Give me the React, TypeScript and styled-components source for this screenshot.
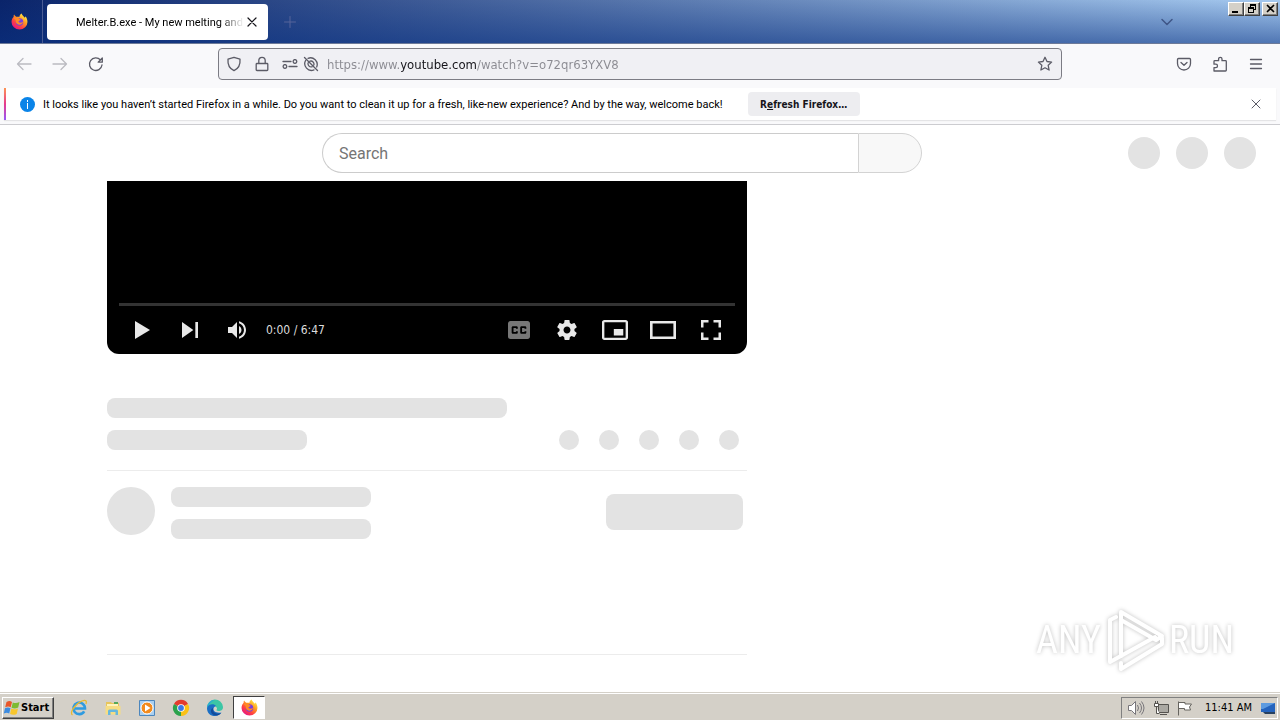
import React from "react";
import styled, { createGlobalStyle, css } from "styled-components";

const ui = `Roboto, "Liberation Sans", sans-serif`;
const uiWide = `"DejaVu Sans Condensed", "DejaVu Sans", sans-serif`;

const GlobalStyle = createGlobalStyle`
  *, *::before, *::after { box-sizing: border-box; }
  body { margin: 0; background: #fff; font-family: ${ui}; font-size: 11px; color: #15141a; }
  button { font: inherit; color: inherit; padding: 0; border: 0; background: none; }
  svg { display: block; flex: none; }
`;

const Desktop = styled.div`
  display: flex;
  flex-direction: column;
  min-height: 100vh;
`;

/* ---- browser chrome ---- */

const TitleBar = styled.header`
  display: flex;
  height: 44px;
  border-bottom: 1px solid #6d7a98;
  background:
    linear-gradient(to bottom, transparent, rgba(10, 50, 130, 0.55)),
    linear-gradient(to right, #0a246a, #a6caf0);
`;

const FirefoxView = styled.button`
  display: grid;
  place-items: center;
  width: 43px;
  padding-right: 3px;
  border-right: 1px solid #4a5c94;
`;

const Tab = styled.div`
  display: flex;
  align-items: center;
  width: 221px;
  height: 36px;
  margin: 4px 0 0 4px;
  padding: 0 8px 0 29px;
  border-radius: 4px;
  background: #fff;
`;

const TabTitle = styled.span`
  flex: 1;
  white-space: nowrap;
  color: #000;
  mask-image: linear-gradient(to left, transparent, #000 24px);
`;

const IconButton = styled.button<{ $w?: number; $color?: string }>`
  display: grid;
  place-items: center;
  width: ${(p) => p.$w ?? 36}px;
  height: 32px;
  flex: none;
  color: ${(p) => p.$color ?? "#5b5b66"};
`;

const TabActions = styled.div`
  display: flex;
  align-items: center;
  flex: 1;
  justify-content: space-between;
  padding: 0 43px 0 4px;
`;

const WindowButtons = styled.div`
  display: flex;
  padding: 2px 2px 0 0;
`;

const raised = css`
  background: #d4d0c8;
  border: 1px solid;
  border-color: #fff #404040 #404040 #fff;
  box-shadow: inset -1px -1px 0 #808080;
`;

const WindowButton = styled.button<{ $gap?: boolean }>`
  ${raised}
  display: grid;
  place-items: center;
  width: 16px;
  height: 14px;
  margin-left: ${(p) => (p.$gap ? 2 : 0)}px;
  color: #000;
`;

const NavBar = styled.nav`
  display: flex;
  align-items: center;
  height: 44px;
  padding: 0 6px 4px;
  background: #f9f9fb;
`;

const NavGroup = styled.div<{ $end?: boolean }>`
  display: flex;
  flex: 1 1 0;
  justify-content: ${(p) => (p.$end ? "flex-end" : "flex-start")};
`;

const AddressBar = styled.form`
  display: flex;
  align-items: center;
  flex: 0 1 844px;
  height: 32px;
  padding: 0 2px;
  border: 1px solid #7c7c84;
  border-radius: 4px;
  background: #f0f0f4;
`;

const UrlInput = styled.input`
  flex: 1;
  min-width: 0;
  height: 28px;
  padding: 0;
  margin-left: 8px;
  border: 0;
  outline: 0;
  font: 13px ${uiWide};
  color: #75757d;
  -webkit-text-fill-color: transparent;
  background: linear-gradient(to right, #8a8a91 74px, #15141a 74px, #15141a 150px, #8a8a91 150px);
  -webkit-background-clip: text;
  background-clip: text;
`;

const Notice = styled.section`
  display: flex;
  align-items: center;
  height: 37px;
  padding: 0 4px 4px;
  background: #f9f9fb;
  border-bottom: 1px solid #ccccd0;
`;

const NoticeCard = styled.div`
  display: flex;
  align-items: center;
  flex: 1;
  height: 32px;
  padding-left: 14px;
  border-left: 2px solid;
  border-image: linear-gradient(to bottom, #ff9a50, #e63a8c, #9059ff) 1;
  background: #fff;
  box-shadow: 0 1px 1px #e4e4e6;
`;

const NoticeText = styled.span`
  margin: 0 25px 0 8px;
  color: #000;
  white-space: nowrap;
`;

const RefreshButton = styled.button`
  width: 112px;
  height: 24px;
  border-radius: 4px;
  background: #ededf0;
  font-weight: bold;
  font-size: 10px;
  font-family: ${uiWide};
  white-space: nowrap;
`;

const Spacer = styled.div`
  flex: 1;
`;

/* ---- page ---- */

const Page = styled.main`
  position: relative;
  flex: 1;
  background: #fff;
`;

const Masthead = styled.header`
  display: flex;
  align-items: center;
  height: 56px;
`;

const MastheadStart = styled.div`
  flex: 1 1 0;
`;

const MastheadEnd = styled.div`
  display: flex;
  justify-content: flex-end;
  gap: 16px;
  flex: 1 1 36px;
  padding-right: 24px;
`;

const SearchForm = styled.form`
  display: flex;
  flex: 0 1 600px;
  height: 40px;
`;

const SearchInput = styled.input`
  flex: 1;
  min-width: 0;
  padding: 0 16px;
  border: 1px solid #ccc;
  border-right: 0;
  border-radius: 40px 0 0 40px;
  outline: 0;
  background: #fff;
  font: 16px Roboto, sans-serif;
  color: #111;
  &::placeholder { color: #757575; opacity: 1; }
`;

const SearchButton = styled.button`
  width: 64px;
  border: 1px solid #d3d3d3;
  border-radius: 0 40px 40px 0;
  background: #f8f8f8;
`;

const Bone = styled.div<{ $w: number; $h?: number; $r?: number }>`
  width: ${(p) => p.$w}px;
  height: ${(p) => p.$h ?? 20}px;
  border-radius: ${(p) => p.$r ?? 8}px;
  background: #e3e3e3;
`;

const Columns = styled.div`
  display: grid;
  grid-template-columns: minmax(0, 640fr) minmax(0, 402fr);
  gap: 24px;
  max-width: 1066px;
  margin: 0 auto;
`;

const Player = styled.section`
  display: flex;
  flex-direction: column;
  justify-content: flex-end;
  height: 173px;
  padding: 0 12px;
  border-radius: 0 0 12px 12px;
  background: #000;
`;

const Progress = styled.div`
  height: 3px;
  background: #333;
`;

const Controls = styled.div`
  display: flex;
  align-items: center;
  height: 48px;
  color: #eee;
`;

const PlayerButton = styled.button<{ $w: number; $dim?: boolean }>`
  display: grid;
  place-items: center;
  width: ${(p) => p.$w}px;
  height: 48px;
  color: ${(p) => (p.$dim ? "#777" : "#e8e8e8")};
`;

const Time = styled.span`
  padding-left: 6px;
  font: 12px ${uiWide};
  color: #ddd;
`;

const Details = styled.section`
  display: flex;
  flex-direction: column;
  gap: 12px;
  padding: 44px 0 20px;
  border-bottom: 1px solid #ececec;
`;

const Row = styled.div`
  display: flex;
  justify-content: space-between;
  padding-right: 8px;
`;

const Dots = styled.div`
  display: flex;
  gap: 20px;
`;

const Owner = styled.section`
  display: flex;
  gap: 16px;
  height: 184px;
  padding: 16px 4px 0 0;
  border-bottom: 1px solid #ececec;
`;

const OwnerLines = styled.div`
  display: flex;
  flex-direction: column;
  gap: 12px;
  flex: 1;
`;

const SubscribeSlot = styled.div`
  padding-top: 7px;
`;

const Watermark = styled.div`
  position: absolute;
  right: 46px;
  bottom: 20px;
  display: flex;
  align-items: center;
  gap: 4px;
  color: #fff;
  font: 38px "Liberation Sans Narrow", "Roboto Condensed", "Liberation Sans", sans-serif;
  filter: drop-shadow(0 0 2px rgba(0, 0, 0, 0.25));
`;

/* ---- taskbar ---- */

const Taskbar = styled.footer`
  display: flex;
  align-items: center;
  height: 28px;
  padding: 2px 2px 0;
  border-top: 1px solid #d4d0c8;
  box-shadow: inset 0 1px 0 #fff;
  background: #d4d0c8;
`;

const StartButton = styled.button`
  ${raised}
  display: flex;
  align-items: center;
  width: 52px;
  height: 22px;
  margin-right: 8px;
  font-weight: bold;
  font-family: ${uiWide};
  color: #000;
`;

const TaskButton = styled.button<{ $active?: boolean }>`
  display: grid;
  place-items: center;
  width: ${(p) => (p.$active ? 32 : 34)}px;
  height: 23px;
  ${(p) =>
    p.$active &&
    css`
      margin-left: 1px;
      background: #fff;
      border: 1px solid;
      border-color: #404040 #fff #fff #404040;
    `}
`;

const Tray = styled.div`
  display: flex;
  align-items: center;
  gap: 8px;
  height: 22px;
  padding: 0 1px 0 5px;
  border: 1px solid;
  border-color: #808080 #fff #fff #808080;
  color: #000;
`;

const Clock = styled.time`
  padding-left: 4px;
  font-family: ${uiWide};
  white-space: nowrap;
`;

/* ---- drawings ---- */

const Line = ({ d, size = 16, w = 1.3, box = 16 }: { d: string; size?: number; w?: number; box?: number }) => (
  <svg width={size} height={size} viewBox={`0 0 ${box} ${box}`} fill="none" stroke="currentColor" strokeWidth={w} strokeLinecap="round" strokeLinejoin="round" aria-hidden>
    <path d={d} />
  </svg>
);

const Solid = ({ d, w, h, box }: { d: string; w: number; h: number; box: string }) => (
  <svg width={w} height={h} viewBox={box} fill="currentColor" fillRule="evenodd" preserveAspectRatio="none" aria-hidden>
    <path d={d} />
  </svg>
);

const FirefoxLogo = ({ id, size = 17 }: { id: string; size?: number }) => (
  <svg width={size} height={size} viewBox="0 0 32 32" aria-hidden>
    <defs>
      <linearGradient id={id} x1="0.85" y1="0.1" x2="0.2" y2="0.95">
        <stop offset="0" stopColor="#fff04a" />
        <stop offset="0.35" stopColor="#ff9a20" />
        <stop offset="0.7" stopColor="#ff3d45" />
        <stop offset="1" stopColor="#e31587" />
      </linearGradient>
    </defs>
    <path fill={`url(#${id})`} d="M20 1c1 4 4 5 6 8 1-1 1-2 1-3 3 3 4 7 4 11a15 14 0 0 1-30 0C1 12 3 9 5 7c0-2 0-3 1-4 1 2 2 3 4 4l6 0c0-3 2-5 4-6z" />
    <circle cx="16" cy="17" r="7" fill="#7a3de0" />
    <path fill="#ff8a25" d="M5 10c4-3 8-2 10 1l3 1c0 2-3 2-4 4 1 3 6 3 9 0-1 6-8 8-12 4-3-3-2-6-2-7z" />
  </svg>
);

const WindowsFlag = () => (
  <svg width="18" height="16" viewBox="0 0 18 16" aria-hidden>
    <path fill="#e8562a" d="M3.500 2C6 .5 7.500 1 9 2L7.700 7.300C6 6.300 4.500 6.300 2.200 7.300z" />
    <path fill="#7dbb32" d="M9.800 2.400c2 1 4 1 6.700-.4L15.200 7.500c-2.400 1.200-4.500 1.200-6.700.2z" />
    <path fill="#3c8be0" d="M2 8.200c2-1 4-.9 5.500 0L6.200 13.500C4.500 12.500 3 12.500.8 13.500z" />
    <path fill="#f8c62c" d="M8.300 8.600c2.200 1 4.200 1 6.700-.2l-1.300 5.500c-2.500 1.200-4.600 1-6.600 0z" />
  </svg>
);

const ExplorerLogo = () => (
  <svg width="18" height="18" viewBox="0 0 18 18" fill="none" aria-hidden>
    <path d="M14.200 12.300A5.800 5.800 0 1 1 15 9.500H5" stroke="#2f9be0" strokeWidth="2.600" />
    <path d="M2.500 16C-1 14 5 5 12 2c4-1.500 5 0 4 3" stroke="#e8b92e" strokeWidth="1.300" />
  </svg>
);

const FolderLogo = () => (
  <svg width="18" height="18" viewBox="0 0 18 18" aria-hidden>
    <path d="M2 3h5l1 1h7v11H2z" fill="#e7c55c" />
    <path d="M3 5h11v3H3z" fill="#fdf3bd" />
    <path d="M1.500 7h15v8.500h-15z" fill="#f6dd83" />
    <path d="M4 16v-4q0-1.500 1.500-1.500h7q1.500 0 1.500 1.500v4h-2.500v-3h-5v3z" fill="#66b7de" />
    <path d="M10 3h4v2h-4z" fill="#54a85a" />
  </svg>
);

const MediaLogo = () => (
  <svg width="18" height="18" viewBox="0 0 18 18" aria-hidden>
    <path d="M1.500 1.500h15v15h-15z" fill="#a9cff0" stroke="#4c86bd" />
    <circle cx="9" cy="9" r="6" fill="#f28a1c" stroke="#fff" />
    <path d="M7 5.500 12.500 9 7 12.500z" fill="#fff" />
  </svg>
);

const ChromeLogo = () => (
  <svg width="18" height="18" viewBox="0 0 18 18" aria-hidden>
    <path d="M9 9 2 5A8 8 0 0 1 16 5z" fill="#e33b2e" />
    <path d="M9 9 16 5A8 8 0 0 1 9 17z" fill="#fbc116" />
    <path d="M9 9v8A8 8 0 0 1 2 5z" fill="#2ba24c" />
    <circle cx="9" cy="9" r="3.800" fill="#fff" />
    <circle cx="9" cy="9" r="2.900" fill="#3b78e7" />
  </svg>
);

const EdgeLogo = () => (
  <svg width="18" height="18" viewBox="0 0 18 18" aria-hidden>
    <path d="M1 9a8 8 0 0 1 16-1c0 3-2 4-4.500 4-2 0-2.500-.8-1.500-2 .5-3-6-5-10-1z" fill="#3cc6a5" />
    <path d="M1 9a8 8 0 0 1 8-8C3 4 5 4 1 9z" fill="#2aa9d8" />
    <path d="M1 9c1-4 7-5 9-2-4 1-4 8 5.500 6.500C12 19 1 18.500 1 9z" fill="#1b6fc4" />
    <path d="M7 9c-1 4 3 7 8 5-3 4-9 3-10-1-.4-2 .5-3.500 2-4z" fill="#134b9a" />
  </svg>
);

const ShieldD = "M8 1.300 14 3.200C14.500 8.500 12 12.700 8 14.700 4 12.700 1.500 8.500 2 3.200z";
const LockD = "M3 7.500h10q.8 0 .8.800v5.400q0 .8-.8.800H3q-.8 0-.8-.8V8.300q0-.8.8-.8zM4.800 7.300V4.500a3.200 3.200 0 0 1 6.400 0v2.800";
const SlidersD = "M1 5.500h8M15 10.500H7M13 3.700a1.800 1.800 0 1 1-.1 0M3 8.700a1.800 1.800 0 1 1-.1 0";
const BlockedD = "M1.500 1.500l13 13M5 2.300A6.700 6.700 0 0 1 13.700 11M2.600 4.500A6.700 6.700 0 0 0 11 13.900M7 5.200A3 3 0 0 1 10.800 9M5.200 6.600A3.200 3.200 0 0 0 9 10.800";
const StarD = "M8 1.300l2 4.200 4.600.6-3.400 3.200.9 4.700L8 11.800 3.900 14l.9-4.700L1.400 6.100 6 5.500z";
const PocketD = "M2.500 2.500h11q1 0 1 1V7.500a6.500 6.500 0 0 1-13 0V3.500q0-1 1-1zM5 6.500l3 2.800 3-2.800";
const PuzzleD = "M2 15V11.600h1.800a1.700 1.700 0 0 0 0-3.400H2V5.500q0-.8.800-.8H6.600V3a1.700 1.700 0 0 1 3.400 0v1.700h3.500q.8 0 .8.800v8.700q0 .8-.8.800z";

const GearD =
  "m 23.94,18.78 c .03,-0.25 .05,-0.51 .05,-0.78 0,-0.27 -0.02,-0.52 -0.05,-0.78 l 1.68,-1.32 c .15,-0.12 .19,-0.33 .09,-0.51 l -1.6,-2.76 c -0.09,-0.17 -0.31,-0.24 -0.48,-0.17 l -1.99,.8 c -0.41,-0.32 -0.86,-0.58 -1.35,-0.78 l -0.30,-2.12 c -0.02,-0.19 -0.19,-0.33 -0.39,-0.33 l -3.2,0 c -0.2,0 -0.36,.14 -0.39,.33 l -0.30,2.12 c -0.48,.2 -0.93,.47 -1.35,.78 l -1.99,-0.8 c -0.18,-0.07 -0.39,0 -0.48,.17 l -1.6,2.76 c -0.10,.17 -0.05,.39 .09,.51 l 1.68,1.32 c -0.03,.25 -0.05,.52 -0.05,.78 0,.26 .02,.52 .05,.78 l -1.68,1.32 c -0.15,.12 -0.19,.33 -0.09,.51 l 1.6,2.76 c .09,.17 .31,.24 .48,.17 l 1.99,-0.8 c .41,.32 .86,.58 1.35,.78 l .30,2.12 c .02,.19 .19,.33 .39,.33 l 3.2,0 c .2,0 .36,-0.14 .39,-0.33 l .30,-2.12 c .48,-0.2 .93,-0.47 1.35,-0.78 l 1.99,.8 c .18,.07 .39,0 .48,-0.17 l 1.6,-2.76 c .09,-0.17 .05,-0.39 -0.09,-0.51 l -1.68,-1.32 z m -5.94,2.01 c -1.54,0 -2.8,-1.25 -2.8,-2.8 0,-1.54 1.25,-2.8 2.8,-2.8 1.54,0 2.8,1.25 2.8,2.8 0,1.54 -1.25,2.8 -2.8,2.8 z";
const CaptionsD =
  "M11,11 C9.9,11 9,11.9 9,13 L9,23 C9,24.1 9.9,25 11,25 L25,25 C26.1,25 27,24.1 27,23 L27,13 C27,11.900 26.1,11 25,11 Z M17,17 L15.5,17 L15.5,16.5 L13.5,16.5 L13.5,19.5 L15.5,19.5 L15.5,19 L17,19 L17,20 C17,20.55 16.55,21 16,21 L13,21 C12.45,21 12,20.55 12,20 L12,16 C12,15.45 12.45,15 13,15 L16,15 C16.55,15 17,15.45 17,16 Z M24,17 L22.5,17 L22.5,16.5 L20.5,16.5 L20.5,19.5 L22.5,19.5 L22.5,19 L24,19 L24,20 C24,20.55 23.55,21 23,21 L20,21 C19.45,21 19,20.55 19,20 L19,16 C19,15.45 19.45,15 20,15 L23,15 C23.55,15 24,15.45 24,16 Z";

const leftControls = [
  { label: "Play", w: 15, h: 18, box: "12 10 13 16", d: "M12,26 25,18 12,10z" },
  { label: "Next", w: 16, h: 16, box: "12 12 12 12", d: "M12,24 20.5,18 12,12zM22,12v12h2V12z" },
  {
    label: "Mute",
    w: 18,
    h: 18,
    box: "8 9 18 18",
    d: "M8,21 L12,21 L17,26 L17,10 L12,15 L8,15 Z M19,14 L19,22 C20.48,21.32 21.5,19.77 21.5,18 C21.5,16.26 20.48,14.74 19,14 Z M19,11.29 C21.89,12.15 24,14.83 24,18 C24,21.17 21.89,23.85 19,24.71 L19,26.77 C23.01,25.86 26,22.28 26,18 C26,13.72 23.01,10.14 19,9.23 Z",
  },
];

const rightControls = [
  { label: "Subtitles", w: 22, h: 18, box: "9 11 18 14", d: CaptionsD, dim: true },
  { label: "Settings", w: 20, h: 20, box: "10 10 16 16", d: GearD },
  { label: "Miniplayer", w: 26, h: 20, box: "7 9 22 18", d: "M25,17H17V23H25Z M29,25V11C29,9.9 28.1,9 27,9L9,9C7.9,9 7,9.9 7,11L7,25C7,26.1 7.9,27 9,27L27,27C28.1,27 29,26.1 29,25Z M27,25H9V11H27Z" },
  { label: "Theater mode", w: 26, h: 18, box: "8 11 20 14", d: "M28,11V25H8V11ZM10,13H26V23H10Z" },
  { label: "Full screen", w: 20, h: 20, box: "10 10 16 16", d: "M10,16h2v-4h4v-2H10zM20,10v2h4v4h2V10zM24,24h-4v2H26v-6h-2zM12,20H10V26h6v-2h-4z" },
];

const tasks = [
  { label: "Internet Explorer", icon: <ExplorerLogo /> },
  { label: "Windows Explorer", icon: <FolderLogo /> },
  { label: "Media Player", icon: <MediaLogo /> },
  { label: "Chrome", icon: <ChromeLogo /> },
  { label: "Edge", icon: <EdgeLogo /> },
];

export default function App() {
  return (
    <Desktop>
      <GlobalStyle />
      <TitleBar>
        <FirefoxView aria-label="Firefox View">
          <FirefoxLogo id="fx-view" />
        </FirefoxView>
        <Tab>
          <TabTitle>Melter.B.exe - My new melting and</TabTitle>
          <IconButton $w={16} $color="#15141a" aria-label="Close tab">
            <Line d="M4 4l8 8M12 4l-8 8" w={1.2} />
          </IconButton>
        </Tab>
        <TabActions>
          <IconButton $color="#56659a" aria-label="New tab">
            <Line d="M8 2.500v11M2.500 8h11" w={1} />
          </IconButton>
          <IconButton $color="#3f5687" aria-label="List all tabs">
            <Line d="M3 5.500l5 5 5-5" w={1.5} />
          </IconButton>
        </TabActions>
        <WindowButtons>
          <WindowButton aria-label="Minimize">
            <Solid w={12} h={10} box="0 0 12 10" d="M2 7h6v2H2z" />
          </WindowButton>
          <WindowButton aria-label="Restore">
            <Solid w={12} h={10} box="0 0 12 10" d="M4 0h6v6H8V9H2V3h2zM5 2v1h3v2h1V2zM3 5v3h4V5z" />
          </WindowButton>
          <WindowButton $gap aria-label="Close">
            <Line d="M2.500 1.500l6 6M8.500 1.500l-6 6" size={11} box={11} w={1.7} />
          </WindowButton>
        </WindowButtons>
      </TitleBar>

      <NavBar>
        <NavGroup>
          <IconButton $color="#bbbbc1" aria-label="Back"><Line d="M15 8H1.500M7 2.500L1.500 8 7 13.500" /></IconButton>
          <IconButton $color="#bbbbc1" aria-label="Forward"><Line d="M1 8h13.500M9 2.500L14.500 8 9 13.500" /></IconButton>
          <IconButton aria-label="Reload"><Line d="M14 9A6.300 6.300 0 1 1 12.500 4M14.300 2v4.200H10.200z" w={1.3} /></IconButton>
        </NavGroup>
        <AddressBar>
          <IconButton type="button" $w={26} aria-label="Tracking protection"><Line d={ShieldD} w={1.3} /></IconButton>
          <IconButton type="button" $w={30} aria-label="Site information"><Line d={LockD} w={1.3} /></IconButton>
          <IconButton type="button" $w={26} aria-label="Permissions"><Line d={SlidersD} w={1.3} /></IconButton>
          <IconButton type="button" $w={16} aria-label="Autoplay blocked"><Line d={BlockedD} w={1.3} /></IconButton>
          <UrlInput aria-label="Address" defaultValue="https://www.youtube.com/watch?v=o72qr63YXV8" />
          <IconButton type="button" $w={28} aria-label="Bookmark"><Line d={StarD} w={1.3} /></IconButton>
        </AddressBar>
        <NavGroup $end>
          <IconButton aria-label="Save to Pocket"><Line d={PocketD} /></IconButton>
          <IconButton aria-label="Extensions"><Line d={PuzzleD} w={1.3} /></IconButton>
          <IconButton aria-label="Menu"><Line d="M2.500 3.500h11M2.500 8h11M2.500 12.500h11" /></IconButton>
        </NavGroup>
      </NavBar>

      <Notice>
        <NoticeCard>
          <svg width="15" height="15" viewBox="0 0 15 15" aria-hidden>
            <circle cx="7.500" cy="7.500" r="7.500" fill="#0a84e8" />
            <path d="M7 3h1v2H7zM7 6h1v6H7z" fill="#fff" />
          </svg>
          <NoticeText>
            It looks like you haven’t started Firefox in a while. Do you want to clean it up for a fresh, like-new experience? And by the way, welcome back!
          </NoticeText>
          <RefreshButton>R<u>e</u>fresh Firefox…</RefreshButton>
          <Spacer />
          <IconButton $w={40} aria-label="Dismiss"><Line d="M4 4l8 8M12 4l-8 8" w={1} /></IconButton>
        </NoticeCard>
      </Notice>

      <Page>
        <Masthead>
          <MastheadStart />
          <SearchForm>
            <SearchInput aria-label="Search" placeholder="Search" />
            <SearchButton type="button" aria-label="Submit search" />
          </SearchForm>
          <MastheadEnd>
            <Bone $w={32} $h={32} $r={16} />
            <Bone $w={32} $h={32} $r={16} />
            <Bone $w={32} $h={32} $r={16} />
          </MastheadEnd>
        </Masthead>
        <Columns>
          <div>
            <Player>
              <Progress />
              <Controls>
                {leftControls.map(({ label, ...icon }) => (
                  <PlayerButton key={label} $w={47} aria-label={label}><Solid {...icon} /></PlayerButton>
                ))}
                <Time>0:00 / 6:47</Time>
                <Spacer />
                {rightControls.map(({ label, dim, ...icon }) => (
                  <PlayerButton key={label} $w={48} $dim={dim} aria-label={label}><Solid {...icon} /></PlayerButton>
                ))}
              </Controls>
            </Player>
            <Details>
              <Bone $w={400} />
              <Row>
                <Bone $w={200} />
                <Dots>
                  {[0, 1, 2, 3, 4].map((n) => <Bone key={n} $w={20} $r={10} />)}
                </Dots>
              </Row>
            </Details>
            <Owner>
              <Bone $w={48} $h={48} $r={24} />
              <OwnerLines>
                <Bone $w={200} />
                <Bone $w={200} />
              </OwnerLines>
              <SubscribeSlot><Bone $w={137} $h={36} /></SubscribeSlot>
            </Owner>
          </div>
        </Columns>
        <Watermark>
          <span>ANY</span>
          <svg width="60" height="64" viewBox="0 0 60 64" fill="none" stroke="#fff" strokeWidth="4" strokeLinejoin="round" strokeLinecap="round" aria-hidden>
            <path d="M16 48V4L57 28 51 32 16 12" />
            <path d="M11 9L5 12V54L50 29M16 61L57 36V30M16 61V55" />
          </svg>
          <span>RUN</span>
        </Watermark>
      </Page>

      <Taskbar>
        <StartButton><WindowsFlag />Start</StartButton>
        {tasks.map((t) => (
          <TaskButton key={t.label} aria-label={t.label}>{t.icon}</TaskButton>
        ))}
        <TaskButton $active aria-label="Firefox"><FirefoxLogo id="fx-task" /></TaskButton>
        <Spacer />
        <Tray>
          <svg width="18" height="16" viewBox="0 0 18 16" fill="none" stroke="#77757a" aria-hidden>
            <path d="M1.500 5.500h3l4-4v13l-4-4h-3z" fill="#fff" />
            <path d="M10.500 5q2 3 0 6M12.500 3q4 5 0 10M14.500 1.500q5 6.500 0 13" />
          </svg>
          <svg width="16" height="16" viewBox="0 0 16 16" fill="none" stroke="#55534f" aria-hidden>
            <path d="M5.500 4.500h10v8h-10zM7 14.500h7" fill="#aaa8a2" />
            <path d="M1.500 3.500h4v3h-4zM2.500 1v2M4.500 1v2M3.500 7v6.500h3" fill="#fff" />
          </svg>
          <svg width="16" height="16" viewBox="0 0 16 16" fill="#fff" stroke="#66645f" aria-hidden>
            <path d="M1.500 1.500v14M2 2.500h6v1.500h6.500l-2 3 1 3H7.500V8.500H2" />
          </svg>
          <Clock>11:41 AM</Clock>
          <svg width="16" height="16" viewBox="0 0 16 16" aria-hidden>
            <path d="M1 3h14v9H1z" fill="#2463bd" />
            <path d="M1 3h14L3 9H1z" fill="#5d9be0" />
            <path d="M3 12h12v2H5z" fill="#27405f" />
          </svg>
        </Tray>
      </Taskbar>
    </Desktop>
  );
}
